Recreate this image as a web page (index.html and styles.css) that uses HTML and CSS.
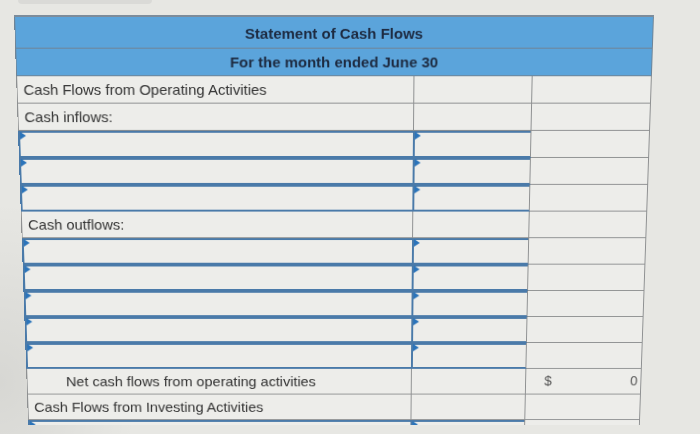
FILE: index.html
```html
<!DOCTYPE html>
<html>
<head>
<meta charset="utf-8">
<title>Statement of Cash Flows</title>
<link rel="stylesheet" href="styles.css">
</head>
<body>
<div class="page">
  <div class="topbar"></div>
  <div class="sheet">
    <table class="cf">
      <colgroup><col class="c1"><col class="c2"><col class="c3"></colgroup>
      <tr class="hd hd1"><th colspan="3">Statement of Cash Flows</th></tr>
      <tr class="hd hd2"><th colspan="3">For the month ended June 30</th></tr>
      <tr><td class="lbl">Cash Flows from Operating Activities</td><td></td><td></td></tr>
      <tr><td class="lbl">Cash inflows:</td><td></td><td></td></tr>
      <tr><td class="in a"><div class="box"></div></td><td class="in b"><div class="box"></div></td><td></td></tr>
      <tr><td class="in a"><div class="box"></div></td><td class="in b"><div class="box"></div></td><td></td></tr>
      <tr><td class="in a"><div class="box"></div></td><td class="in b"><div class="box"></div></td><td></td></tr>
      <tr><td class="lbl">Cash outflows:</td><td></td><td></td></tr>
      <tr><td class="in a"><div class="box"></div></td><td class="in b"><div class="box"></div></td><td></td></tr>
      <tr><td class="in a"><div class="box"></div></td><td class="in b"><div class="box"></div></td><td></td></tr>
      <tr><td class="in a"><div class="box"></div></td><td class="in b"><div class="box"></div></td><td></td></tr>
      <tr><td class="in a"><div class="box"></div></td><td class="in b"><div class="box"></div></td><td></td></tr>
      <tr><td class="in a"><div class="box"></div></td><td class="in b"><div class="box"></div></td><td></td></tr>
      <tr><td class="lbl net">Net cash flows from operating activities</td><td></td><td class="tot"><div class="totbox"><span>$</span><span>0</span></div></td></tr>
      <tr><td class="lbl">Cash Flows from Investing Activities</td><td></td><td></td></tr>
      <tr class="cut"><td class="in a"><div class="box"></div></td><td class="in b"><div class="box"></div></td><td></td></tr>
    </table>
  </div>
</div>
</body>
</html>
```

FILE: styles.css
```css
html, body {
  margin: 0;
  height: 434px;
  overflow: hidden;
}
body {
  background:
    radial-gradient(ellipse 140px 180px at 0% 88%, rgba(0,0,0,0.07), rgba(0,0,0,0) 100%),
    #e7e7e3;
  font-family: "Liberation Sans", Arial, sans-serif;
}
.page {
  padding-top: 0;
}
.topbar {
  margin-left: 18px;
  width: 134px;
  height: 4px;
  background: #dadad7;
  border-radius: 0 0 4px 4px;
}
.sheet {
  margin-top: 11px;
  margin-left: 14px;
  width: 639px;
  transform-origin: 319.5px 0;
  transform: perspective(1000px) rotateX(-6.15deg);
}
.cf {
  border-collapse: collapse;
  table-layout: fixed;
  width: 639px;
  border-top: 2px solid #7d8c9a;
}
.c1 { width: 400px; }
.c2 { width: 119px; }
.c3 { width: 120px; }
.cf tr { height: 28px; }
.cf .hd1 { height: 32px; }
.cf th {
  background: #5ba4db;
  color: #1d2a40;
  font-weight: bold;
  font-size: 15px;
  text-align: center;
  border: 1px solid #6f8496;
  padding: 0;
}
.cf .hd1 th { padding-top: 2px; }
.cf .hd2 th { padding-top: 1px; }
.cf td {
  border: 1px solid #8e9091;
  background: #ededea;
  color: #333;
  font-size: 15px;
  padding: 0 6px;
  white-space: nowrap;
  overflow: hidden;
}
.cf td.net { padding-left: 40px; }
.cf td.in {
  padding: 0;
  vertical-align: top;
  border-bottom-color: #4a7aa9;
}
.cf td.in.a {
  border-left-color: #4a7aa9;
  border-right-color: #4a7aa9;
}
.box {
  position: relative;
  height: 27px;
  box-sizing: border-box;
  border-top: 2px solid #4a7aa9;
  border-bottom: 1px solid #4a7aa9;
  border-left: 1px solid #4a7aa9;
}
.box::before {
  content: "";
  position: absolute;
  left: 0;
  top: -1px;
  border-left: 6px solid #2b74ba;
  border-top: 4px solid transparent;
  border-bottom: 4px solid transparent;
}
.cf td.tot { padding: 0 3px 0 19px; }
.totbox {
  display: flex;
  justify-content: space-between;
  font-size: 14px;
  color: #555;
}
.cf .cut { height: 5px; }
.cf .cut td {
  height: 5px;
  border-bottom: 0;
}
.cf .cut .box {
  height: 5px;
  border-bottom: 0;
}
```
